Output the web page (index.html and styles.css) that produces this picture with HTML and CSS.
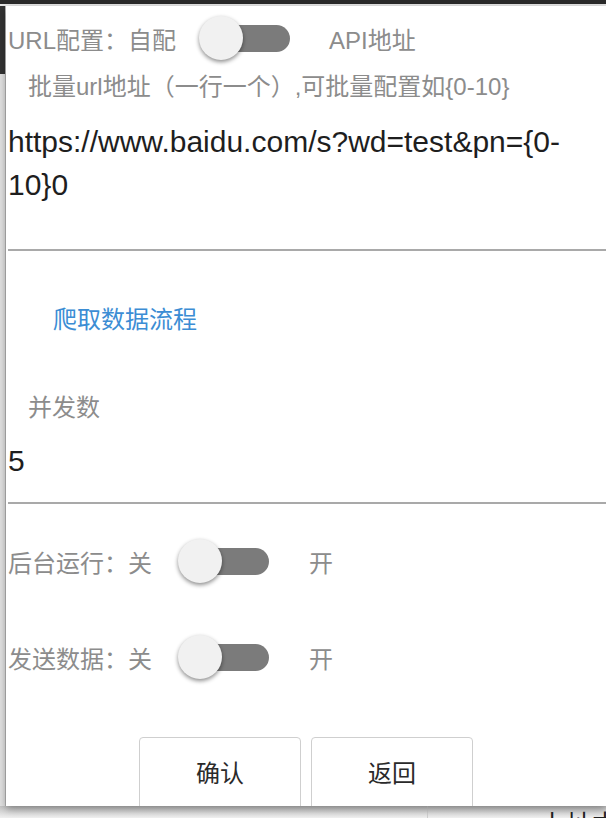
FILE: index.html
```html
<!DOCTYPE html>
<html lang="zh-CN">
<head>
<meta charset="utf-8">
<title>URL配置</title>
<link rel="stylesheet" href="styles.css">
</head>
<body>
<div class="topbar"></div>
<div class="topgap"></div>
<div class="stage">
  <div class="sidebar"><div class="sidebar-dark"></div></div>
  <div class="dialog">
    <div class="row row-first">
      <span class="label">URL配置：自配</span>
      <span class="toggle toggle-url"></span>
      <span class="label label-right">API地址</span>
    </div>
    <div class="hint hint-batch">批量url地址（一行一个）,可批量配置如{0-10}</div>
    <div class="field field-url">https://www.baidu.com/s?wd=test&amp;pn={0-<br>10}0</div>
    <div class="link">爬取数据流程</div>
    <div class="hint hint-conc">并发数</div>
    <div class="field field-num">5</div>
    <div class="row row-bg">
      <span class="label">后台运行：关</span>
      <span class="toggle toggle-small"></span>
      <span class="label label-open">开</span>
    </div>
    <div class="row row-send">
      <span class="label">发送数据：关</span>
      <span class="toggle toggle-small"></span>
      <span class="label label-open">开</span>
    </div>
    <div class="actions">
      <button class="btn">确认</button>
      <button class="btn">返回</button>
    </div>
  </div>
</div>
<div class="below">
  <div class="below-left"></div>
  <div class="below-right"><span class="below-text">上址本</span></div>
</div>
</body>
</html>
```
FILE: styles.css
```css
html, body {
  margin: 0;
  padding: 0;
}
body {
  width: 606px;
  height: 818px;
  overflow: hidden;
  background: #f2f2f2;
  font-family: "Liberation Sans", "Noto Sans CJK SC", sans-serif;
}
.topbar {
  height: 4px;
  background: #2a2a2a;
}
.topgap {
  height: 2px;
  background: #e6e6e6;
}
.stage {
  display: flex;
  height: 800px;
}
.sidebar {
  width: 5px;
  flex: none;
  background: #e2e2e2;
  border-right: 1px solid #b8b8b8;
}
.sidebar-dark {
  height: 68px;
  background: #333;
}
.dialog {
  flex: 1;
  position: relative;
  z-index: 1;
  background: #fff;
  overflow: hidden;
  padding-left: 2px;
  box-shadow: 0 3px 8px rgba(0, 0, 0, 0.35);
}
.row {
  display: flex;
  align-items: center;
  height: 48px;
}
.row-first {
  margin-top: 8px;
}
.label {
  font-size: 24px;
  color: #8c8c8c;
  white-space: nowrap;
}
.label-right {
  margin-left: 39px;
}
.label-open {
  margin-left: 40px;
}
.toggle {
  position: relative;
  width: 92px;
  height: 46px;
  flex: none;
}
.toggle::before {
  content: "";
  position: absolute;
  left: 14px;
  right: 0;
  top: 10px;
  height: 27px;
  border-radius: 14px;
  background: #7b7b7b;
}
.toggle::after {
  content: "";
  position: absolute;
  left: 1px;
  top: 1px;
  width: 44px;
  height: 44px;
  border-radius: 50%;
  background: #f1f1f1;
  box-shadow: 0 2px 4px rgba(0, 0, 0, 0.45);
}
.toggle-url {
  margin-left: 22px;
}
.toggle-small {
  margin-left: 25px;
}
.hint {
  height: 48px;
  line-height: 48px;
  padding-left: 20px;
  font-size: 24px;
  color: #8c8c8c;
  white-space: nowrap;
}
.hint-batch {
  margin-top: 1px;
}
.field {
  font-size: 30px;
  line-height: 43px;
  color: #1e1e1e;
  border-bottom: 2px solid #a9a9a9;
}
.field-url {
  padding-top: 9px;
  padding-bottom: 43px;
}
.link {
  margin-top: 45px;
  height: 48px;
  line-height: 48px;
  padding-left: 45px;
  font-size: 24px;
  color: #3c8dd4;
}
.hint-conc {
  margin-top: 40px;
}
.field-num {
  padding-top: 7px;
  padding-bottom: 20px;
}
.row-bg {
  margin-top: 33px;
}
.row-send {
  margin-top: 48px;
}
.actions {
  display: flex;
  justify-content: center;
  gap: 10px;
  margin-top: 56px;
  padding-right: 2px;
}
.btn {
  width: 162px;
  height: 80px;
  padding: 0 0 12px;
  background: #fff;
  border: 1px solid #cfcfcf;
  border-radius: 4px;
  font-family: "Liberation Sans", "Noto Sans CJK SC", sans-serif;
  font-size: 24px;
  color: #2a2a2a;
}
.below {
  display: flex;
  height: 12px;
  background: linear-gradient(#c4c4c4, #f0f0f0);
}
.below-left {
  width: 427px;
  border-right: 1px solid #cfcfcf;
}
.below-right {
  flex: 1;
  overflow: hidden;
  position: relative;
}
.below-text {
  display: block;
  margin-left: 112px;
  margin-top: 4px;
  font-size: 26px;
  line-height: 30px;
  color: #222;
  white-space: nowrap;
}
```
